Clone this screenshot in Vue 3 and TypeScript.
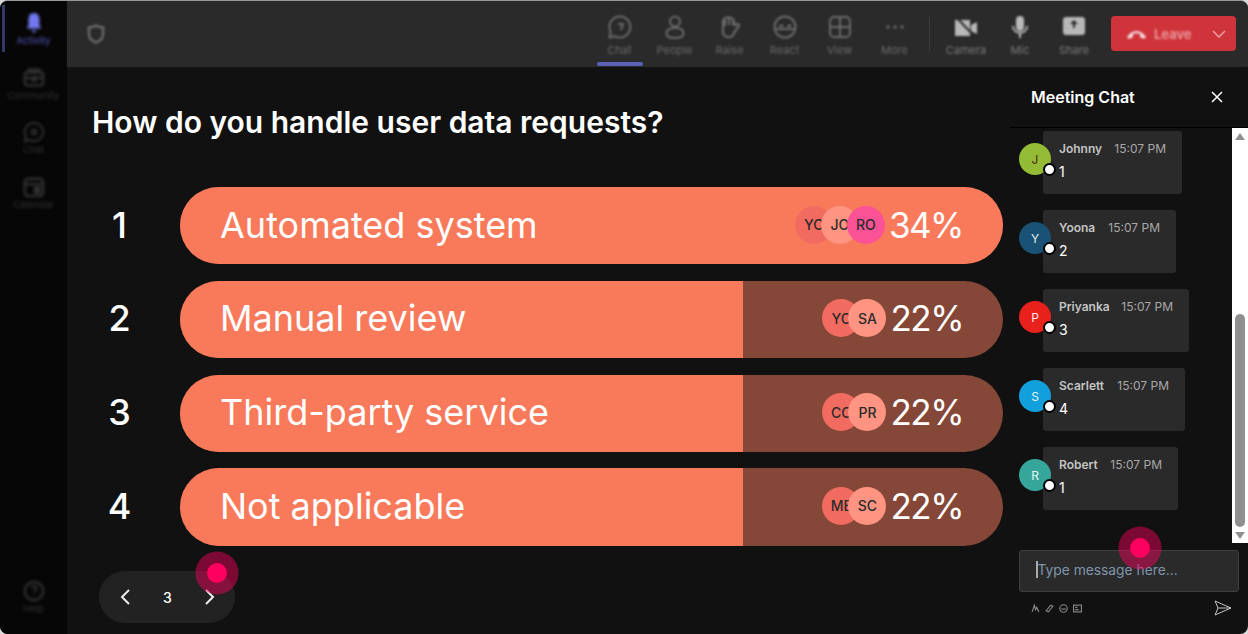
<script setup lang="ts">
interface Opt { n: number; label: string; pct: number; fill: number; voters: { t: string; c: string }[] }
const options: Opt[] = [
  { n: 1, label: 'Automated system', pct: 34, fill: 100, voters: [{ t: 'YO', c: '#f26b60' }, { t: 'JO', c: '#ff9482' }, { t: 'RO', c: '#fb5295' }] },
  { n: 2, label: 'Manual review', pct: 22, fill: 68.4, voters: [{ t: 'YO', c: '#f26b60' }, { t: 'SA', c: '#ff9482' }] },
  { n: 3, label: 'Third-party service', pct: 22, fill: 68.4, voters: [{ t: 'CO', c: '#f26b60' }, { t: 'PR', c: '#ff9482' }] },
  { n: 4, label: 'Not applicable', pct: 22, fill: 68.4, voters: [{ t: 'ME', c: '#f26b60' }, { t: 'SC', c: '#ff9482' }] },
]
const messages = [
  { name: 'Johnny', text: '1', c: '#93bb35', fg: '#4a2a10', w: 139 },
  { name: 'Yoona', text: '2', c: '#1a5276', fg: '#e8eef2', w: 133 },
  { name: 'Priyanka', text: '3', c: '#e8211c', fg: '#ffe9e9', w: 146 },
  { name: 'Scarlett', text: '4', c: '#12a0dc', fg: '#e4f4fb', w: 142 },
  { name: 'Robert', text: '1', c: '#36a69b', fg: '#e6f5f3', w: 135 },
]
const topLeft = ['Chat', 'People', 'Raise', 'React', 'View', 'More']
const topRight = ['Camera', 'Mic', 'Share']
const sideItems = ['Activity', 'Community', 'Chat', 'Calendar']
</script>

<template>
  <div class="window">
    <aside class="side">
      <div class="side-top">
        <div v-for="(s, i) in sideItems" :key="s" class="side-item" :class="{ active: i === 0 }">
          <svg width="24" height="24" viewBox="0 0 24 24" class="side-ico">
            <path v-if="i === 0" d="M12 1c4.500 0 6 3.500 6 8v6l2 3H4l2-3V9c0-4.500 1.500-8 6-8z M9 20h6l-3 3z" fill="currentColor" />
            <g v-else-if="i === 1" fill="none" stroke="currentColor" stroke-width="2.500">
              <rect x="2" y="6" width="20" height="14" rx="3" /><path d="M6 6V3h12v3M2 12h20" /><circle cx="12" cy="13" r="2" />
            </g>
            <g v-else-if="i === 2" fill="none" stroke="currentColor" stroke-width="2">
              <path d="M12 2a10 10 0 1 1-5 18.700L2 22l1.300-5A10 10 0 0 1 12 2z" /><circle cx="12" cy="12" r="2.500" />
            </g>
            <g v-else fill="none" stroke="currentColor" stroke-width="2.500">
              <rect x="2" y="3" width="20" height="19" rx="4" /><path d="M2 9h20" /><rect x="13" y="13" width="5" height="5" fill="currentColor" />
            </g>
          </svg>
          <span>{{ s }}</span>
        </div>
      </div>
      <div class="side-item help">
        <svg width="24" height="24" viewBox="0 0 24 24" class="side-ico">
          <circle cx="12" cy="12" r="10" fill="none" stroke="currentColor" stroke-width="2.500" />
          <path d="M9 9c1-3 6-3 6 0 0 2-3 2-3 5M12 17v1" fill="none" stroke="currentColor" stroke-width="2" />
        </svg>
        <span>Help</span>
      </div>
    </aside>

    <div class="main">
      <header class="top">
        <svg class="shield" width="18" height="20" viewBox="0 0 18 20">
          <path d="M9 1.500c2.500 1.500 5 2 7 2v7c0 4-3.500 6.500-7 8-3.500-1.500-7-4-7-8v-7c2 0 4.500-.5 7-2z" fill="none" stroke="#6b6b6b" stroke-width="2.400" />
        </svg>
        <div class="top-spacer"></div>
        <div class="tools left-tools">
          <div v-for="(t, i) in topLeft" :key="t" class="tool" :class="{ current: i === 0 }">
            <svg width="24" height="24" viewBox="0 0 24 24" class="tool-ico">
              <g v-if="i === 0" fill="none" stroke="currentColor" stroke-width="2">
                <path d="M12 1.500a10.500 10.500 0 1 1-5 19.800L1.500 22.500l1.200-5.500A10.500 10.500 0 0 1 12 1.500z" /><path d="M10 9h5l-2 6" />
              </g>
              <g v-else-if="i === 1" fill="none" stroke="currentColor" stroke-width="2">
                <circle cx="12" cy="6.500" r="5" /><path d="M12 13c-5 0-8.500 2-8.500 5.500S8 23 12 23s8.500-1 8.500-4.500S17 13 12 13z" />
              </g>
              <g v-else-if="i === 2" fill="none" stroke="currentColor" stroke-width="2.200">
                <path d="M5 6c2-5 9-5 11 0v4l4-1 1 2-5 7c-1 5-9 6-11 0z" /><path d="M7 5v6M11 3v7M15 5v5" />
              </g>
              <g v-else-if="i === 3" fill="none" stroke="currentColor" stroke-width="2">
                <circle cx="12" cy="12" r="10.500" /><path d="M3 14h18M8 10l2 1-4 0M16 10l2 1-4 0" />
              </g>
              <g v-else-if="i === 4" fill="none" stroke="currentColor" stroke-width="2">
                <rect x="2" y="2" width="20" height="20" rx="4" /><path d="M12 2v20M2 12h20" />
              </g>
              <g v-else fill="currentColor">
                <circle cx="5" cy="12" r="1.700" /><circle cx="12" cy="12" r="1.700" /><circle cx="19" cy="12" r="1.700" />
              </g>
            </svg>
            <span>{{ t }}</span>
          </div>
        </div>
        <div class="divider"></div>
        <div class="tools right-tools">
          <div v-for="(t, i) in topRight" :key="t" class="tool bright">
            <svg width="24" height="24" viewBox="0 0 24 24" class="tool-ico">
              <g v-if="i === 0">
                <path d="M1 5h15v16H1z" fill="currentColor" /><path d="M17 10l6-3v12l-6-3z" fill="currentColor" /><path d="M3 3l18 19" stroke="#2a2a2a" stroke-width="2" />
              </g>
              <g v-else-if="i === 1">
                <rect x="8" y="1" width="8" height="15" rx="4" fill="currentColor" /><path d="M5 11c0 9 14 9 14 0M12 18v5" fill="none" stroke="currentColor" stroke-width="2" />
              </g>
              <g v-else>
                <rect x="1" y="2" width="22" height="18" rx="3" fill="currentColor" /><path d="M12 5l-4 4h3v4h2V9h3z" fill="#2a2a2a" />
              </g>
            </svg>
            <span>{{ t }}</span>
          </div>
        </div>
        <div class="leave">
          <div class="leave-in">
            <svg width="21" height="10" viewBox="0 0 21 10"><path d="M1 8c5-8 14-8 19 0l-2 2-4-2V5c-2-1-5-1-7 0v3l-4 2z" fill="#f6dcdc" /></svg>
            <span>Leave</span>
          </div>
          <svg class="chev" width="14" height="8" viewBox="0 0 14 8"><path d="M1 1l6 6 6-6" fill="none" stroke="#e79a9f" stroke-width="1.600" /></svg>
        </div>
      </header>

      <div class="body">
        <section class="poll">
          <h1>How do you handle user data requests?</h1>
          <div class="opts">
            <div v-for="o in options" :key="o.n" class="opt">
              <div class="num">{{ o.n }}</div>
              <div class="bar">
                <div class="bar-fill" :style="{ width: o.fill + '%' }"></div>
                <span class="bar-label">{{ o.label }}</span>
                <div class="bar-right">
                  <div class="voters">
                    <span v-for="v in o.voters" :key="v.t" class="voter" :style="{ background: v.c }">{{ v.t }}</span>
                  </div>
                  <span class="pct">{{ o.pct }}%</span>
                </div>
              </div>
            </div>
          </div>
          <div class="pager">
            <svg width="12" height="18" viewBox="0 0 12 18"><path d="M10 2L3 9l7 7" fill="none" stroke="#eee" stroke-width="2" /></svg>
            <span>3</span>
            <svg width="12" height="18" viewBox="0 0 12 18"><path d="M2 2l7 7-7 7" fill="none" stroke="#eee" stroke-width="2" /></svg>
            <i class="pointer"></i>
          </div>
        </section>

        <aside class="chat">
          <div class="chat-head">
            <span>Meeting Chat</span>
            <svg width="12" height="12" viewBox="0 0 12 12"><path d="M1 1l10 10M11 1L1 11" stroke="#fff" stroke-width="1.500" /></svg>
          </div>
          <div class="chat-scroll">
            <div class="msgs">
              <div v-for="m in messages" :key="m.name" class="msg">
                <div class="avatar" :style="{ background: m.c, color: m.fg }">
                  {{ m.name[0] }}
                  <i class="dot"></i>
                </div>
                <div class="bubble" :style="{ width: m.w + 'px' }">
                  <div class="meta"><b>{{ m.name }}</b><span>15:07 PM</span></div>
                  <div class="text">{{ m.text }}</div>
                </div>
              </div>
            </div>
            <div class="scrollbar">
              <i class="arr up"></i>
              <i class="thumb"></i>
              <i class="arr down"></i>
            </div>
          </div>
          <div class="compose">
            <div class="input">
              <i class="caret"></i><span>Type message here...</span>
              <i class="pointer chat-pointer"></i>
            </div>
            <div class="compose-row">
              <div class="mini">
                <svg width="9" height="9" viewBox="0 0 8 8"><path d="M1 7l2-6 1 4 1-2 2 4" fill="none" stroke="#888" /></svg>
                <svg width="9" height="9" viewBox="0 0 8 8"><path d="M1 6l4-5 2 1-4 5z" fill="none" stroke="#888" /></svg>
                <svg width="9" height="9" viewBox="0 0 8 8"><circle cx="4" cy="4" r="3.300" fill="none" stroke="#888" /><path d="M2 4.500h4" stroke="#888" /></svg>
                <svg width="9" height="9" viewBox="0 0 8 8"><rect x=".5" y="1" width="7" height="6" fill="none" stroke="#888" /><path d="M2 3h2M2 5h3" stroke="#888" /></svg>
              </div>
              <svg width="18" height="16" viewBox="0 0 18 16"><path d="M1 1l16 7-16 7 3-7zM4 8h13" fill="none" stroke="#c4c4c4" stroke-width="1" /></svg>
            </div>
          </div>
        </aside>
      </div>
    </div>
  </div>
</template>

<style>
html, body { margin: 0; background: #d9d9d9; }
</style>

<style scoped>
.window {
  width: 1248px; height: 634px; display: flex; overflow: hidden; box-sizing: border-box;
  background: #111; border-top: 1px solid #9a9a9a; border-radius: 8px;
  font-family: Inter, "Liberation Sans", sans-serif; color: #fff;
}
.side {
  width: 67px; flex: none; background: #060606; display: flex; flex-direction: column; justify-content: space-between;
  padding-bottom: 20px; box-sizing: border-box;
}
.side-top { display: flex; flex-direction: column; }
.side-item {
  height: 54.600px; display: flex; flex-direction: column; align-items: center; justify-content: flex-end;
  gap: 1px; color: #333; font-size: 9.600px; box-sizing: border-box; position: relative;
}
.side-item > * { filter: blur(1.400px); }
.side-item.active { height: 45px; color: #7378f0; }
.side-item.active span { color: #5558c0; }
.side-item.active::before { content: ""; position: absolute; left: 2px; top: 4px; width: 3px; height: 47px; background: #34376e; filter: blur(.6px); }
.side-ico { width: 22px; height: 22px; }
.side-item.help { height: auto; }
.main { flex: 1; min-width: 0; display: flex; flex-direction: column; }
.top { height: 66px; flex: none; background: #2a2a2a; display: flex; align-items: center; padding-left: 20px; padding-right: 12px; box-shadow: 0 1px 3px #151515; }
.shield { filter: blur(.8px); }
.top-spacer { flex: 1; }
.tools { display: flex; height: 100%; }
.tool {
  width: 55px; height: 100%; position: relative; display: flex; flex-direction: column; align-items: center; justify-content: flex-end;
  gap: 4px; font-size: 11px; color: #6a6a6a; padding-bottom: 10px; box-sizing: border-box;
}
.tool > svg, .tool > span { filter: blur(1.300px); }
.tool-ico { width: 24px; height: 24px; }
.tool.bright { color: #b8b8b8; }
.tool.bright span { color: #7a7a7a; }
.tool.current::after { content: ""; position: absolute; left: 5px; right: 4px; bottom: 1px; height: 4px; background: #5d60b5; border-radius: 2px; filter: blur(.5px); }
.divider { width: 1px; height: 34px; background: #3d3d3d; margin: 0 9px 0 7px; filter: blur(.5px); }
.right-tools .tool { width: 54px; }
.leave {
  margin-left: 10px; margin-bottom: 1px; width: 125px; height: 35px; background: #d0343b; border-radius: 4px; display: flex; align-items: center; justify-content: space-between;
  padding: 0 10px 0 15px; box-sizing: border-box; font-size: 13px; font-weight: 600; color: #eba0a3;
}
.leave-in { display: flex; align-items: center; gap: 7px; filter: blur(.8px); }
.chev { filter: blur(.5px); }
.body { flex: 1; min-height: 0; display: flex; }
.poll { flex: 1; min-width: 0; padding: 37px 7px 0 25px; box-sizing: border-box; position: relative; }
h1 { margin: 0; font-size: 30px; line-height: 36px; font-weight: 600; }
.opts { margin-top: 47px; display: flex; flex-direction: column; gap: 16.600px; }
.opt { display: flex; align-items: center; }
.num { width: 55px; margin-right: 33px; padding-bottom: 2px; text-align: center; font-size: 36px; font-weight: 500; }
.bar { flex: 1; height: 77.200px; box-sizing: border-box; border-radius: 39px; background: #854737; overflow: hidden; position: relative; display: flex; align-items: center; justify-content: space-between; padding: 0 40px 2px; }
.bar-fill { position: absolute; inset: 0 auto 0 0; background: #f87a5b; }
.bar-label { position: relative; font-size: 36px; font-weight: 400; }
.bar-right { position: relative; display: flex; align-items: center; gap: 4px; }
.pct { font-size: 35px; font-weight: 400; letter-spacing: -1.500px; }
.voters { display: flex; }
.voter { width: 38px; height: 38px; border-radius: 50%; margin-left: -12px; display: flex; align-items: center; justify-content: center; font-size: 14px; font-weight: 500; color: #2b2b2b; overflow: hidden; }
.pager {
  position: absolute; left: 32px; bottom: 11px; width: 136px; height: 52px; border-radius: 26px; background: #222; display: flex; align-items: center; justify-content: space-between;
  padding: 0 19px 0 20px; box-sizing: border-box; font-size: 14px; font-weight: 500;
}
.pointer { position: absolute; width: 20px; height: 20px; border-radius: 50%; background: #fe005f; box-shadow: 0 0 0 11.500px rgba(254, 0, 95, .45); left: 108px; top: -8px; }
.chat { width: 238px; flex: none; display: flex; flex-direction: column; }
.chat-head { height: 61px; flex: none; border-bottom: 1px solid #000; display: flex; align-items: center; justify-content: space-between; padding: 0 25px 0 21px; box-sizing: border-box; font-size: 16px; font-weight: 600; }
.chat-scroll { height: 415px; flex: none; display: flex; }
.msgs { flex: 1; padding: 3px 0 0 9px; display: flex; flex-direction: column; gap: 16px; overflow: hidden; }
.msg { display: flex; align-items: flex-start; }
.avatar { width: 32px; height: 32px; margin-top: 12px; border-radius: 50%; flex: none; display: flex; align-items: center; justify-content: center; font-size: 12px; position: relative; z-index: 1; margin-right: -8px; }
.dot { position: absolute; width: 9px; height: 9px; border-radius: 50%; background: #fff; border: 2px solid #000; right: -5px; bottom: -1px; box-sizing: content-box; }
.bubble { height: 63px; background: #2a2a2a; border-radius: 3px; padding: 10px 16px; box-sizing: border-box; }
.meta { display: flex; justify-content: space-between; font-size: 12px; color: #a8a8a8; line-height: 15px; }
.meta b { font-weight: 600; color: #c4c4c4; }
.text { font-size: 14px; margin-top: 7px; line-height: 17px; }
.scrollbar { width: 16px; flex: none; background: #fff; position: relative; }
.thumb { position: absolute; left: 3px; right: 3px; top: 186px; height: 213px; background: #8f8f8f; border-radius: 5px; }
.arr { position: absolute; left: 3px; width: 0; height: 0; border-left: 5px solid transparent; border-right: 5px solid transparent; }
.up { top: 5px; border-bottom: 7px solid #8f8f8f; }
.down { bottom: 4px; border-top: 7px solid #8f8f8f; }
.compose { padding: 7px 9px 0 9px; }
.input { height: 42px; background: #2a2a2a; border: 1px solid #3f3f3f; border-radius: 3px; box-sizing: border-box; display: flex; align-items: center; padding: 0 0 3px 16px; font-size: 13.800px; color: #8095aa; position: relative; }
.caret { width: 1.500px; height: 17px; background: #aaa; flex: none; }
.chat-pointer { left: 110px; top: -13px; }
.compose-row { display: flex; align-items: center; justify-content: space-between; padding: 8px 7px 0 12px; }
.mini { display: flex; gap: 5px; filter: blur(.3px); }
</style>
